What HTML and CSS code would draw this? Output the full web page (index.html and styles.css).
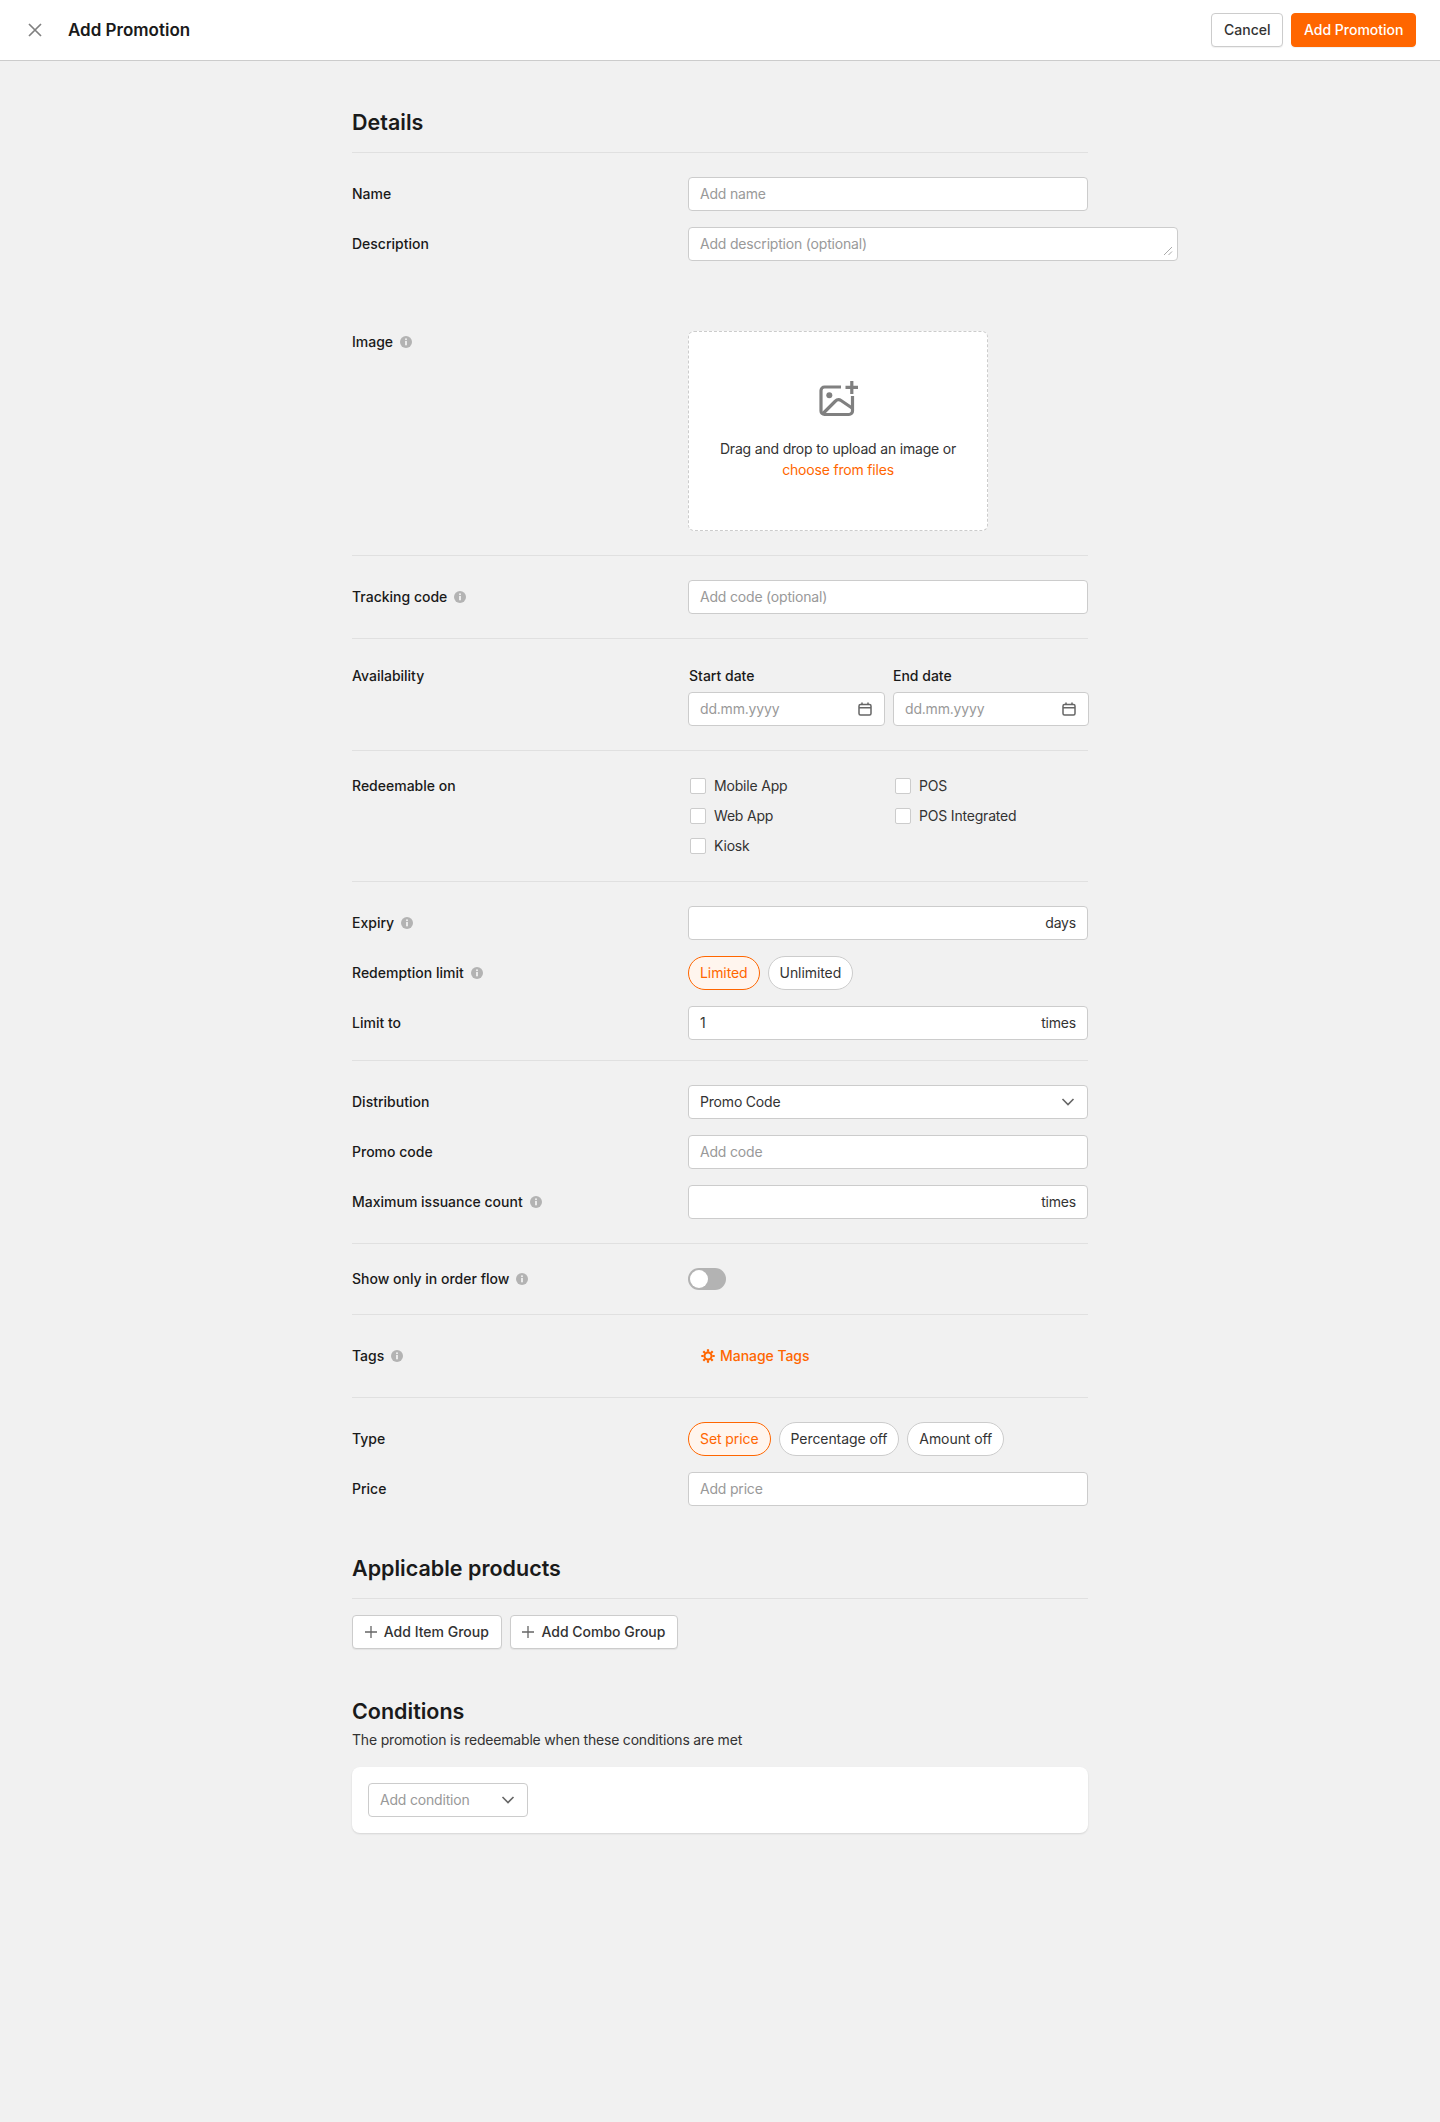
FILE: index.html
```html
<!DOCTYPE html>
<html lang="en">
<head>
<meta charset="utf-8">
<title>Add Promotion</title>
<link rel="stylesheet" href="styles.css">
</head>
<body>
<header class="topbar">
  <div class="topbar-left">
    <svg class="close-icon" width="14" height="14" viewBox="0 0 14 14"><path d="M1 1l12 12M13 1L1 13"/></svg>
    <span class="topbar-title">Add Promotion</span>
  </div>
  <div class="topbar-actions">
    <button class="btn">Cancel</button>
    <button class="btn btn-primary">Add Promotion</button>
  </div>
</header>
<main class="page">
  <h2 class="section-title">Details</h2>

  <section class="group">
    <div class="row"><span class="label">Name</span><div class="input placeholder">Add name</div></div>
    <div class="row row-desc"><span class="label">Description</span>
      <div class="input textarea placeholder">Add description (optional)
        <svg class="resize" width="10" height="10" viewBox="0 0 10 10"><path d="M1 9l8-8M5.500 9L9 5.500"/></svg>
      </div>
    </div>
    <div class="row row-top"><span class="label">Image <svg class="info" width="12" height="12" viewBox="0 0 12 12"><circle cx="6" cy="6" r="6"/><circle class="info-i" cx="6" cy="3.300" r="1"/><rect class="info-i" x="5.100" y="5" width="1.800" height="4.300"/></svg></span>
      <div class="dropzone">
        <svg class="image-icon" width="40" height="36" viewBox="0 0 40 36"><path d="M23 6H6.500a3.500 3.500 0 0 0-3.500 3.500V30a3.500 3.500 0 0 0 3.500 3.500H31a3.500 3.500 0 0 0 3.500-3.500V15"/><circle class="fill" cx="11.300" cy="14.300" r="3"/><path d="M5 32.500L17 20.500q3-3 6 -1L34 27"/><path d="M33.800 0v13M27.500 6.400h12.500"/></svg>
        <p class="drop-text">Drag and drop to upload an image or</p>
        <p class="drop-link">choose from files</p>
      </div>
    </div>
  </section>

  <section class="group">
    <div class="row"><span class="label">Tracking code <svg class="info" width="12" height="12" viewBox="0 0 12 12"><circle cx="6" cy="6" r="6"/><circle class="info-i" cx="6" cy="3.300" r="1"/><rect class="info-i" x="5.100" y="5" width="1.800" height="4.300"/></svg></span><div class="input placeholder">Add code (optional)</div></div>
  </section>

  <section class="group">
    <div class="row row-top"><span class="label label-tall">Availability</span>
      <div class="dates">
        <div class="date-field"><span class="date-label">Start date</span>
          <div class="input placeholder date-input">dd.mm.yyyy
            <svg class="calendar" width="14" height="14" viewBox="0 0 14 14"><rect x="1" y="2.500" width="12" height="10.500" rx="1.500"/><path d="M1 5.800h12M4 .500V3M10 .500V3"/></svg>
          </div>
        </div>
        <div class="date-field"><span class="date-label">End date</span>
          <div class="input placeholder date-input">dd.mm.yyyy
            <svg class="calendar" width="14" height="14" viewBox="0 0 14 14"><rect x="1" y="2.500" width="12" height="10.500" rx="1.500"/><path d="M1 5.800h12M4 .500V3M10 .500V3"/></svg>
          </div>
        </div>
      </div>
    </div>
  </section>

  <section class="group">
    <div class="row row-top"><span class="label">Redeemable on</span>
      <div class="checks">
        <label class="check"><span class="box"></span>Mobile App</label>
        <label class="check"><span class="box"></span>POS</label>
        <label class="check"><span class="box"></span>Web App</label>
        <label class="check"><span class="box"></span>POS Integrated</label>
        <label class="check"><span class="box"></span>Kiosk</label>
      </div>
    </div>
  </section>

  <section class="group group-tight">
    <div class="row"><span class="label">Expiry <svg class="info" width="12" height="12" viewBox="0 0 12 12"><circle cx="6" cy="6" r="6"/><circle class="info-i" cx="6" cy="3.300" r="1"/><rect class="info-i" x="5.100" y="5" width="1.800" height="4.300"/></svg></span><div class="input input-suffix"><span></span><span>days</span></div></div>
    <div class="row"><span class="label">Redemption limit <svg class="info" width="12" height="12" viewBox="0 0 12 12"><circle cx="6" cy="6" r="6"/><circle class="info-i" cx="6" cy="3.300" r="1"/><rect class="info-i" x="5.100" y="5" width="1.800" height="4.300"/></svg></span>
      <div class="pills"><span class="pill pill-on">Limited</span><span class="pill">Unlimited</span></div></div>
    <div class="row"><span class="label">Limit to</span><div class="input input-suffix"><span>1</span><span>times</span></div></div>
  </section>

  <section class="group">
    <div class="row"><span class="label">Distribution</span><div class="input input-suffix input-select"><span>Promo Code</span><svg class="chevron" width="14" height="8" viewBox="0 0 14 8"><path d="M1.500 1l5.500 5.500L12.500 1"/></svg></div></div>
    <div class="row"><span class="label">Promo code</span><div class="input placeholder">Add code</div></div>
    <div class="row"><span class="label">Maximum issuance count <svg class="info" width="12" height="12" viewBox="0 0 12 12"><circle cx="6" cy="6" r="6"/><circle class="info-i" cx="6" cy="3.300" r="1"/><rect class="info-i" x="5.100" y="5" width="1.800" height="4.300"/></svg></span><div class="input input-suffix"><span></span><span>times</span></div></div>
  </section>

  <section class="group">
    <div class="row row-auto"><span class="label">Show only in order flow <svg class="info" width="12" height="12" viewBox="0 0 12 12"><circle cx="6" cy="6" r="6"/><circle class="info-i" cx="6" cy="3.300" r="1"/><rect class="info-i" x="5.100" y="5" width="1.800" height="4.300"/></svg></span>
      <span class="toggle"><span class="knob"></span></span></div>
  </section>

  <section class="group">
    <div class="row"><span class="label">Tags <svg class="info" width="12" height="12" viewBox="0 0 12 12"><circle cx="6" cy="6" r="6"/><circle class="info-i" cx="6" cy="3.300" r="1"/><rect class="info-i" x="5.100" y="5" width="1.800" height="4.300"/></svg></span>
      <a class="manage"><svg class="gear" width="14" height="14" viewBox="0 0 14 14"><circle cx="7" cy="7" r="3.500"/><path class="gear-teeth" d="M7 .300v2.400M7 11.300v2.400M.300 7h2.400M11.300 7h2.400M2.300 2.300L4 4M10 10l1.700 1.700M11.700 2.300L10 4M4 10l-1.700 1.700"/></svg>Manage Tags</a></div>
  </section>

  <section class="group group-last">
    <div class="row"><span class="label">Type</span>
      <div class="pills"><span class="pill pill-on">Set price</span><span class="pill">Percentage off</span><span class="pill">Amount off</span></div></div>
    <div class="row"><span class="label">Price</span><div class="input placeholder">Add price</div></div>
  </section>

  <h2 class="section-title section-next">Applicable products</h2>
  <div class="add-buttons">
    <button class="btn btn-add"><svg class="plus" width="12" height="12" viewBox="0 0 12 12"><path d="M6 0v12M0 6h12"/></svg>Add Item Group</button>
    <button class="btn btn-add"><svg class="plus" width="12" height="12" viewBox="0 0 12 12"><path d="M6 0v12M0 6h12"/></svg>Add Combo Group</button>
  </div>

  <h2 class="cond-title">Conditions</h2>
  <p class="cond-sub">The promotion is redeemable when these conditions are met</p>
  <div class="cond-card">
    <div class="input input-suffix input-select cond-select placeholder"><span>Add condition</span><svg class="chevron" width="14" height="8" viewBox="0 0 14 8"><path d="M1.500 1l5.500 5.500L12.500 1"/></svg></div>
  </div>
</main>
</body>
</html>
```
FILE: styles.css
```css
* { box-sizing: border-box; }
html, body { margin: 0; padding: 0; }
body {
  background: #f1f1f1;
  color: #333;
  font-family: Inter, "Liberation Sans", sans-serif;
  font-size: 14px;
  line-height: 22px;
  letter-spacing: -0.19px;
  min-height: 2122px;
}
.topbar {
  height: 61px;
  background: #fff;
  border-bottom: 1px solid #ccc;
  display: flex;
  justify-content: space-between;
  align-items: center;
  padding: 0 24px 1px 28px;
}
.topbar-left { display: flex; align-items: center; gap: 26px; }
.close-icon { fill: none; stroke: #808080; stroke-width: 1.700; }
.topbar-title { font-size: 17px; font-weight: 600; color: #1a1a1a; letter-spacing: 0; }
.topbar-actions { display: flex; gap: 8px; }
.btn {
  height: 34px;
  padding: 0 12px;
  border: 1px solid #ccc;
  border-radius: 4px;
  background: #fff;
  color: #333;
  font: 500 14px/22px Inter, "Liberation Sans", sans-serif;
  letter-spacing: 0;
  box-shadow: 0 1px 1px rgba(0, 0, 0, .06);
}
.btn-primary { background: #f60; border-color: #f60; color: #fff; padding: 0 11.500px; }
.page { width: 736px; margin: 0 auto; padding-top: 47px; }
.section-title {
  margin: 0;
  font-size: 21.500px;
  line-height: 28px;
  font-weight: 600;
  letter-spacing: 0;
  color: #1a1a1a;
  padding-bottom: 16px;
  border-bottom: 1px solid #e0e0e0;
}
.section-next { margin-top: 48px; }
.group {
  padding: 24px 0;
  border-bottom: 1px solid #e0e0e0;
  display: flex;
  flex-direction: column;
  gap: 16px;
}
.group-tight { padding-bottom: 20px; }
.group-last { border-bottom: 0; padding-bottom: 0; }
.row { display: grid; grid-template-columns: 336px 400px; align-items: center; min-height: 34px; }
.row-top { align-items: start; }
.row-auto { min-height: 22px; }
.row-desc { margin-bottom: 54px; }
.label {
  font-weight: 500;
  letter-spacing: 0;
  color: #1a1a1a;
  display: flex;
  align-items: center;
  gap: 7px;
}
.label-tall { line-height: 25px; }
.info { fill: #b3b3b3; flex: none; }
.info-i { fill: #f1f1f1; }
.input {
  height: 34px;
  background: #fff;
  border: 1px solid #ccc;
  border-radius: 4px;
  padding: 0 11px;
  display: flex;
  align-items: center;
  color: #333;
}
.placeholder { color: #999; }
.textarea { width: 490px; position: relative; }
.resize { position: absolute; right: 4px; bottom: 4px; fill: none; stroke: #aaa; stroke-width: 1; }
.input-suffix { justify-content: space-between; }
.input-select { padding-right: 12px; }
.chevron { fill: none; stroke: #666; stroke-width: 1.600; }
.dropzone {
  width: 300px;
  height: 200px;
  background: #fff;
  border: 1px dashed #ccc;
  border-radius: 6px;
  display: flex;
  flex-direction: column;
  align-items: center;
  padding-top: 49px;
}
.image-icon { fill: none; stroke: #808080; stroke-width: 3.200; margin-bottom: 21px; }
.image-icon .fill { fill: #808080; stroke: none; }
.drop-text, .drop-link { margin: 0; }
.drop-link { color: #f60; margin-top: -1px; }
.dates { display: grid; grid-template-columns: 197px 196px; gap: 8px; width: 401px; }
.date-field { display: flex; flex-direction: column; gap: 4px; }
.date-label { font-weight: 500; letter-spacing: 0; color: #1a1a1a; line-height: 25px; padding-left: 1px; }
.date-field + .date-field .date-label { padding-left: 0; }
.date-input { justify-content: space-between; padding-right: 12px; }
.calendar { fill: none; stroke: #666; stroke-width: 1.500; }
.checks { display: grid; grid-template-columns: 205px 1fr; gap: 8px 0; padding-left: 2px; }
.check { display: flex; align-items: center; gap: 8px; }
.box { width: 16px; height: 16px; background: #fff; border: 1px solid #ccc; border-radius: 2px; }
.pills { display: flex; gap: 8px; letter-spacing: -0.08px; }
.pill {
  height: 34px;
  padding: 0 11px;
  background: #fff;
  border: 1px solid #ccc;
  border-radius: 17px;
  display: flex;
  align-items: center;
}
.pill-on { background: #fff5ee; border-color: #f60; color: #f60; }
.toggle {
  width: 38px;
  height: 22px;
  border-radius: 11px;
  background: #b3b3b3;
  padding: 2px;
  display: block;
}
.knob { display: block; width: 18px; height: 18px; border-radius: 50%; background: #fff; }
.manage {
  display: flex;
  align-items: center;
  gap: 5px;
  padding-left: 13px;
  color: #f60;
  font-weight: 500;
  letter-spacing: -0.05px;
}
.gear { fill: none; stroke: #f60; stroke-width: 2; }
.gear-teeth { stroke-width: 2.200; }
.add-buttons { display: flex; gap: 8px; margin-top: 16px; }
.btn-add { display: flex; align-items: center; gap: 7px; padding: 0 11.800px; }
.plus { fill: none; stroke: #666; stroke-width: 1.300; }
.cond-title { margin: 48px 0 0; font-size: 21.500px; line-height: 28px; font-weight: 600; letter-spacing: 0; color: #1a1a1a; }
.cond-sub { margin: 4px 0 16px; }
.cond-card {
  height: 66px;
  background: #fff;
  border-radius: 8px;
  padding: 16px;
  box-shadow: 0 1px 2px rgba(0, 0, 0, .12);
}
.cond-select { width: 160px; }
```
